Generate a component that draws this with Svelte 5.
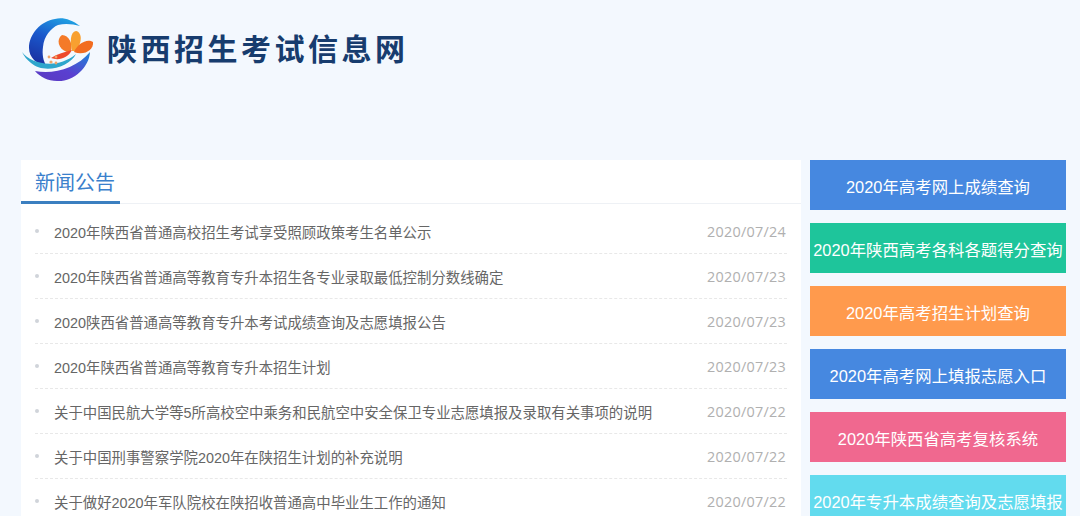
<script>
  const news = [
    { title: '2020年陕西省普通高校招生考试享受照顾政策考生名单公示', date: '2020/07/24' },
    { title: '2020年陕西省普通高等教育专升本招生各专业录取最低控制分数线确定', date: '2020/07/23' },
    { title: '2020陕西省普通高等教育专升本考试成绩查询及志愿填报公告', date: '2020/07/23' },
    { title: '2020年陕西省普通高等教育专升本招生计划', date: '2020/07/23' },
    { title: '关于中国民航大学等5所高校空中乘务和民航空中安全保卫专业志愿填报及录取有关事项的说明', date: '2020/07/22' },
    { title: '关于中国刑事警察学院2020年在陕招生计划的补充说明', date: '2020/07/22' },
    { title: '关于做好2020年军队院校在陕招收普通高中毕业生工作的通知', date: '2020/07/22' }
  ];

  const links = [
    { label: '2020年高考网上成绩查询', color: '#4688e0' },
    { label: '2020年陕西高考各科各题得分查询', color: '#1ec59b' },
    { label: '2020年高考招生计划查询', color: '#ff9a4d' },
    { label: '2020年高考网上填报志愿入口', color: '#4688e0' },
    { label: '2020年陕西省高考复核系统', color: '#f0688f' },
    { label: '2020年专升本成绩查询及志愿填报', color: '#62dbee' }
  ];
</script>

<div class="page">
  <header class="top">
    <svg class="logo" width="84" height="66" viewBox="0 0 84 66">
      <defs>
        <linearGradient id="ring" x1="0.7" y1="0" x2="0.3" y2="1">
          <stop offset="0" stop-color="#1f9fe2" />
          <stop offset="0.45" stop-color="#1a58cc" />
          <stop offset="1" stop-color="#1a2f9f" />
        </linearGradient>
        <linearGradient id="swoosh" x1="0" y1="1" x2="1" y2="0">
          <stop offset="0" stop-color="#5a3ac0" />
          <stop offset="0.45" stop-color="#5a3fd0" />
          <stop offset="1" stop-color="#1c86d8" />
        </linearGradient>
      </defs>
      <path d="M59 10 C50 3 41 1 34 3 C20 5 8 18 8 32 C8 42 16 48 26 51 C22 45 21 38 22 31 C23 20 30 12 37 9 C44 7 52 8 59 10Z" fill="url(#ring)" />
      <path d="M1 36 C10 48 36 54 55 38 C48 52 22 58 10 47 C6 44 3 40 1 36Z" fill="#2ea6cc" />
      <path d="M14 55 C32 59 56 52 69 36 C68 52 52 66 36 65 C27 65 19 61 14 55Z" fill="url(#swoosh)" />
      <path d="M46 36 C37 33 35 23 41 19 C48 19 52 28 50 35Z" fill="#f47a28" />
      <path d="M51 35 C49 26 49 16 55 15 C61 16 62 27 54 35Z" fill="#f8a030" />
      <path d="M53 36 C56 28 66 22 72 26 C73 34 63 40 53 36Z" fill="#f26c20" />
      <path d="M51 34 C44 36 36 38 30 42 C38 45 47 42 51 34Z" fill="#ee4a2c" />
      <circle cx="30" cy="46" r="1.6" fill="#f0a468" />
      <circle cx="35" cy="47" r="1.4" fill="#f0a468" />
      <circle cx="28" cy="41" r="1.4" fill="#f0a468" />
      <circle cx="35" cy="41" r="1.4" fill="#f0a468" />
    </svg>
    <h1>陕西招生考试信息网</h1>
  </header>

  <main class="content">
    <section class="panel">
      <div class="head"><h2>新闻公告</h2></div>
      <ul>
        {#each news as item}
          <li>
            <span class="dot"></span>
            <span class="title">{item.title}</span>
            <span class="date">{item.date}</span>
          </li>
        {/each}
      </ul>
    </section>

    <aside class="side">
      {#each links as link}
        <a class="btn" href="#top" style:background={link.color}>{link.label}</a>
      {/each}
    </aside>
  </main>
</div>

<style>
  :global(body) { margin: 0; background: #f3f8fe; }
  .page { height: 516px; overflow: hidden; font-family: "Liberation Sans", "Noto Sans CJK SC", sans-serif; }
  .top { height: 160px; display: flex; align-items: flex-start; padding: 16px 0 0 21px; box-sizing: border-box; }
  .logo { flex: none; }
  h1 { margin: 0 0 0 2px; padding-top: 16px; font-family: "Liberation Serif", "Noto Sans CJK SC", serif; font-size: 30px; line-height: 36px; font-weight: 700; letter-spacing: 3.5px; color: #173c6e; }
  .content { display: flex; align-items: flex-start; margin-left: 21px; gap: 9px; }
  .panel { width: 780px; background: #fff; flex: none; }
  .head { height: 44px; display: flex; border-bottom: 1px solid #eef1f5; box-sizing: border-box; }
  h2 { box-sizing: border-box; width: 99px; height: 44px; margin: 0; padding: 9px 0 0 14px; font-size: 20px; line-height: 28px; font-weight: 400; color: #3a80cc; border-bottom: 3px solid #3b7fc0; }
  ul { list-style: none; margin: 0; padding: 5px 14px 0; }
  li { height: 45px; box-sizing: border-box; display: flex; align-items: center; border-bottom: 1px dashed #e8e8e8; font-size: 14.4px; }
  .dot { width: 4px; height: 4px; border-radius: 50%; background: #d0d4da; margin-right: 15px; flex: none; }
  .title { flex: 1; color: #666; white-space: nowrap; }
  .date { color: #b0b0b0; font-family: "Open Sans", sans-serif; font-size: 14.4px; letter-spacing: 0.25px; margin-right: 1px; }
  .side { width: 256px; flex: none; display: flex; flex-direction: column; gap: 13px; }
  .btn { height: 50px; flex: none; box-sizing: border-box; padding-top: 1px; display: flex; align-items: center; justify-content: center; color: #fff; font-size: 16.4px; text-decoration: none; white-space: nowrap; }
</style>
